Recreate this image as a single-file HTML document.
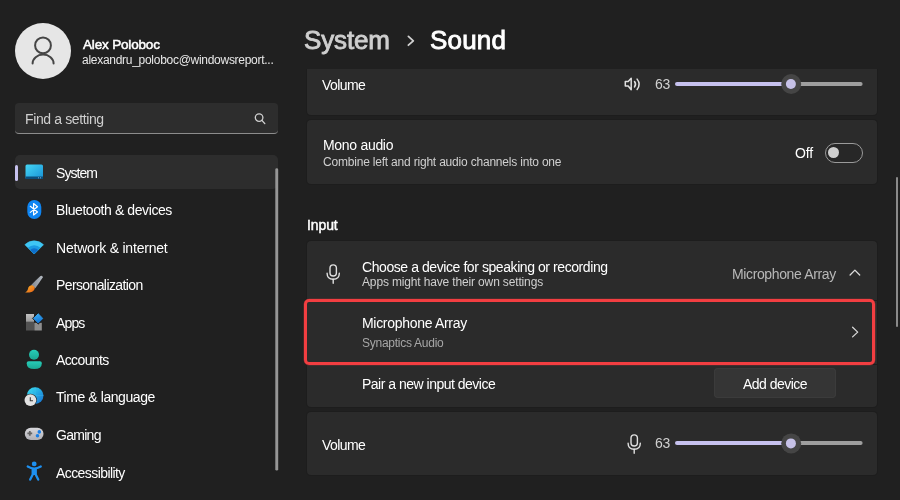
<!DOCTYPE html>
<html><head><meta charset="utf-8"><style>
html,body{margin:0;padding:0;width:900px;height:500px;overflow:hidden;background:#202020;}
body{position:relative;font-family:"Liberation Sans",sans-serif;}
.t{position:absolute;white-space:nowrap;will-change:transform;}
.r{position:absolute;}
</style></head><body>
<div class="r" style="left:15px;top:23px;width:56px;height:56px;background:#e6e6e6;border-radius:28px;"></div>
<svg class="r" style="left:29px;top:35px" width="28" height="32" viewBox="0 0 28 32">
<circle cx="14" cy="10.4" r="7.9" fill="none" stroke="#454545" stroke-width="2"/>
<path d="M3.6 28.6 A10.5 9 0 0 1 24.6 28.6" fill="none" stroke="#454545" stroke-width="2" stroke-linecap="round"/>
</svg>
<div class="t" style="left:83px;top:38.07px;font-size:13.5px;line-height:13.5px;color:#fff;font-weight:normal;letter-spacing:-0.17px;-webkit-text-stroke:0.5px #fff;">Alex Poloboc</div>
<div class="t" style="left:82px;top:54.04px;font-size:12px;line-height:12px;color:#e8e8e8;font-weight:normal;letter-spacing:-0.28px;">alexandru_poloboc@windowsreport...</div>
<div class="r" style="left:15px;top:103px;width:263px;height:31px;background:#2d2d2d;border-radius:4px;border-bottom:1px solid #8c8c8c;box-sizing:border-box;"></div>
<div class="t" style="left:24.8px;top:111.55px;font-size:14px;line-height:14px;color:#cfcfcf;font-weight:normal;letter-spacing:-0.38px;">Find a setting</div>
<svg class="r" style="left:253px;top:111px" width="14" height="14" viewBox="0 0 14 14">
<circle cx="6.1" cy="6.6" r="3.8" fill="none" stroke="#d0d0d0" stroke-width="1.3"/>
<path d="M8.9 9.4 L11.8 12.6" stroke="#d0d0d0" stroke-width="1.4" stroke-linecap="round"/>
</svg>
<div class="r" style="left:15px;top:155px;width:263px;height:34px;background:#2d2d2d;border-radius:5px;"></div>
<div class="r" style="left:15px;top:164.5px;width:3px;height:16px;background:#c6c1ee;border-radius:2px;"></div>
<div class="t" style="left:56.3px;top:165.85px;font-size:14px;line-height:14px;color:#fff;font-weight:normal;letter-spacing:-0.95px;">System</div>
<div class="t" style="left:56.3px;top:202.95px;font-size:14px;line-height:14px;color:#fff;font-weight:normal;letter-spacing:-0.41px;">Bluetooth &amp; devices</div>
<div class="t" style="left:56.3px;top:240.75px;font-size:14px;line-height:14px;color:#fff;font-weight:normal;letter-spacing:-0.2px;">Network &amp; internet</div>
<div class="t" style="left:56.3px;top:278.15px;font-size:14px;line-height:14px;color:#fff;font-weight:normal;letter-spacing:-0.61px;">Personalization</div>
<div class="t" style="left:56.3px;top:316.05px;font-size:14px;line-height:14px;color:#fff;font-weight:normal;letter-spacing:-0.85px;">Apps</div>
<div class="t" style="left:56.3px;top:353.45px;font-size:14px;line-height:14px;color:#fff;font-weight:normal;letter-spacing:-0.61px;">Accounts</div>
<div class="t" style="left:56.3px;top:390.35px;font-size:14px;line-height:14px;color:#fff;font-weight:normal;letter-spacing:-0.43px;">Time &amp; language</div>
<div class="t" style="left:56.3px;top:428.35px;font-size:14px;line-height:14px;color:#fff;font-weight:normal;letter-spacing:-0.71px;">Gaming</div>
<div class="t" style="left:56.3px;top:465.85px;font-size:14px;line-height:14px;color:#fff;font-weight:normal;letter-spacing:-0.58px;">Accessibility</div>
<svg class="r" style="left:270px;top:160px" width="12" height="320"><rect x="5.3" y="8.2" width="2.9" height="302.4" rx="1.45" fill="#969696"/></svg>
<div class="t" style="left:304px;top:27.29px;font-size:26px;line-height:26px;color:#cfcfcf;font-weight:normal;letter-spacing:-0.15px;-webkit-text-stroke:0.85px #cfcfcf;">System</div>
<svg class="r" style="left:405px;top:35px" width="12" height="14" viewBox="0 0 12 14">
<path d="M3.4 1.4 L8.3 5.8 L3.4 10.2" fill="none" stroke="#d0d0d0" stroke-width="1.8" stroke-linecap="round" stroke-linejoin="round"/>
</svg>
<div class="t" style="left:430px;top:27.29px;font-size:26px;line-height:26px;color:#fff;font-weight:normal;letter-spacing:0.2px;-webkit-text-stroke:0.85px #fff;">Sound</div>
<div class="r" style="left:896px;top:177px;width:2px;height:150px;background:#8a8a8a;border-radius:1px;"></div>
<div class="r" style="left:307px;top:69px;width:570px;height:46px;background:#2b2b2b;border-radius:0px;border-radius:0 0 4px 4px;box-shadow:0 1px 0 0 #1d1d1d, 1px 0 0 0 #1d1d1d, -1px 0 0 0 #1d1d1d;"></div>
<div class="t" style="left:322px;top:78.45px;font-size:14px;line-height:14px;color:#fff;font-weight:normal;letter-spacing:-0.58px;">Volume</div>
<svg class="r" style="left:623px;top:76px" width="20" height="16" viewBox="0 0 20 16">
<path d="M2.3 5.6 H5.2 L8.2 2.3 V13.7 L5.2 10 H2.3 Z" fill="none" stroke="#e0e0e0" stroke-width="1.5" stroke-linejoin="round"/>
<path d="M11.5 5.5 Q13.6 8.3 11.5 11" fill="none" stroke="#e0e0e0" stroke-width="1.5" stroke-linecap="round"/>
<path d="M14.1 3.1 Q18.2 8.3 14.1 13.5" fill="none" stroke="#e0e0e0" stroke-width="1.5" stroke-linecap="round"/>
</svg>
<div class="t" style="left:655px;top:77.05px;font-size:14px;line-height:14px;color:#d0d0d0;font-weight:normal;letter-spacing:-0.3px;">63</div>
<svg class="r" style="left:660px;top:69.1px" width="220" height="30" viewBox="660 69.1 220 30">
<line x1="677" y1="84.1" x2="791" y2="84.1" stroke="#c6c1ee" stroke-width="4" stroke-linecap="round"/>
<line x1="791" y1="84.1" x2="860.6" y2="84.1" stroke="#9e9e9e" stroke-width="4" stroke-linecap="round"/>
<circle cx="791.2" cy="84.1" r="10" fill="#454545"/>
<circle cx="790.9" cy="84.1" r="5" fill="#c7c2e8"/>
</svg>
<div class="r" style="left:307px;top:120px;width:570px;height:64px;background:#2b2b2b;border-radius:4px;box-shadow:0 0 0 1px #1d1d1d;"></div>
<div class="t" style="left:322.5px;top:138.15px;font-size:14px;line-height:14px;color:#fff;font-weight:normal;letter-spacing:-0.3px;">Mono audio</div>
<div class="t" style="left:322.5px;top:155.54px;font-size:12px;line-height:12px;color:#cfcfcf;font-weight:normal;letter-spacing:-0.2px;">Combine left and right audio channels into one</div>
<div class="t" style="left:795px;top:145.95px;font-size:14px;line-height:14px;color:#fff;font-weight:normal;letter-spacing:-0.2px;">Off</div>
<div class="r" style="left:825px;top:143px;width:38px;height:19.5px;background:#272727;border-radius:10px;border:1px solid #9a9a9a;box-sizing:border-box;"></div>
<div class="r" style="left:828.2px;top:147.2px;width:11px;height:11px;background:#cfcfcf;border-radius:6px;"></div>
<div class="t" style="left:306.5px;top:218.15px;font-size:14px;line-height:14px;color:#fff;font-weight:normal;letter-spacing:-0.1px;-webkit-text-stroke:0.45px #fff;">Input</div>
<div class="r" style="left:307px;top:241px;width:570px;height:166px;background:#2b2b2b;border-radius:4px;box-shadow:0 0 0 1px #1d1d1d;"></div>
<svg class="r" style="left:325px;top:263px" width="17" height="22" viewBox="0 0 17 22">
<rect x="5" y="1.9" width="6.4" height="11.1" rx="3.2" fill="none" stroke="#e0e0e0" stroke-width="1.4"/>
<path d="M2.1 10.2 Q2.1 16.2 8.2 16.2 Q14.3 16.2 14.3 10.2" fill="none" stroke="#e0e0e0" stroke-width="1.4" stroke-linecap="round"/>
<path d="M8.2 16.2 V20.2" stroke="#e0e0e0" stroke-width="1.4" stroke-linecap="round"/>
</svg>
<div class="t" style="left:361.5px;top:259.95px;font-size:14px;line-height:14px;color:#fff;font-weight:normal;letter-spacing:-0.425px;">Choose a device for speaking or recording</div>
<div class="t" style="left:361.5px;top:276.44px;font-size:12px;line-height:12px;color:#cfcfcf;font-weight:normal;letter-spacing:-0.15px;">Apps might have their own settings</div>
<div class="t" style="left:731.5px;top:267.35px;font-size:14px;line-height:14px;color:#b8b8b8;font-weight:normal;letter-spacing:-0.37px;">Microphone Array</div>
<svg class="r" style="left:848px;top:267px" width="14" height="10" viewBox="0 0 14 10">
<path d="M2.1 8 L6.9 3.1 L11.7 8" fill="none" stroke="#dcdcdc" stroke-width="1.3" stroke-linecap="round" stroke-linejoin="round"/>
</svg>
<div class="r" style="left:307px;top:300px;width:570px;height:1px;background:#1d1d1d;border-radius:0px;"></div>
<div class="r" style="left:307px;top:364px;width:570px;height:1px;background:#1d1d1d;border-radius:0px;"></div>
<div class="r" style="left:304px;top:299px;width:571px;height:66px;background:transparent;border-radius:5px;border:3px solid #f23e41;box-sizing:border-box;box-shadow:0 0 0.6px 0.3px rgba(242,62,65,0.6);"></div>
<div class="t" style="left:361.5px;top:316.45px;font-size:14px;line-height:14px;color:#fff;font-weight:normal;letter-spacing:-0.3px;">Microphone Array</div>
<div class="t" style="left:361.5px;top:336.54px;font-size:12px;line-height:12px;color:#a6a6a6;font-weight:normal;letter-spacing:-0.26px;">Synaptics Audio</div>
<svg class="r" style="left:849px;top:325px" width="10" height="14" viewBox="0 0 10 14">
<path d="M3.6 2.3 L8.7 7.1 L3.6 11.9" fill="none" stroke="#d8d8d8" stroke-width="1.3" stroke-linecap="round" stroke-linejoin="round"/>
</svg>
<div class="t" style="left:362px;top:376.85px;font-size:14px;line-height:14px;color:#fff;font-weight:normal;letter-spacing:-0.5px;">Pair a new input device</div>
<div class="r" style="left:714px;top:368px;width:122px;height:30px;background:#353535;border-radius:4px;box-shadow:inset 0 0 0 1px #3b3b3b;"></div>
<div class="t" style="left:742.5px;top:376.55px;font-size:14px;line-height:14px;color:#fff;font-weight:normal;letter-spacing:-0.52px;">Add device</div>
<div class="r" style="left:307px;top:412px;width:570px;height:62.8px;background:#2b2b2b;border-radius:4px;box-shadow:0 0 0 1px #1d1d1d;"></div>
<div class="t" style="left:322px;top:437.85px;font-size:14px;line-height:14px;color:#fff;font-weight:normal;letter-spacing:-0.58px;">Volume</div>
<svg class="r" style="left:625.5px;top:432.7px" width="17" height="22" viewBox="0 0 17 22">
<rect x="5" y="1.9" width="6.4" height="11.1" rx="3.2" fill="none" stroke="#e0e0e0" stroke-width="1.4"/>
<path d="M2.1 10.2 Q2.1 16.2 8.2 16.2 Q14.3 16.2 14.3 10.2" fill="none" stroke="#e0e0e0" stroke-width="1.4" stroke-linecap="round"/>
<path d="M8.2 16.2 V20.2" stroke="#e0e0e0" stroke-width="1.4" stroke-linecap="round"/>
</svg>
<div class="t" style="left:655px;top:436.45px;font-size:14px;line-height:14px;color:#d0d0d0;font-weight:normal;letter-spacing:-0.3px;">63</div>
<svg class="r" style="left:660px;top:428.3px" width="220" height="30" viewBox="660 428.3 220 30">
<line x1="677" y1="443.3" x2="791" y2="443.3" stroke="#c6c1ee" stroke-width="4" stroke-linecap="round"/>
<line x1="791" y1="443.3" x2="860.6" y2="443.3" stroke="#9e9e9e" stroke-width="4" stroke-linecap="round"/>
<circle cx="791.2" cy="443.7" r="10" fill="#454545"/>
<circle cx="790.9" cy="443.7" r="5" fill="#c7c2e8"/>
</svg>
<svg class="r" style="left:0;top:0" width="60" height="500" viewBox="0 0 60 500">
<defs>
<linearGradient id="gsys" x1="0" y1="0" x2="1" y2="1"><stop offset="0" stop-color="#45d6f5"/><stop offset="1" stop-color="#1892d6"/></linearGradient>
<linearGradient id="gglobe" x1="0.1" y1="0.1" x2="0.9" y2="0.9"><stop offset="0" stop-color="#3ad6ee"/><stop offset="0.45" stop-color="#25aee4"/><stop offset="1" stop-color="#1a78d4"/></linearGradient>
<linearGradient id="gbrush" x1="0" y1="0" x2="1" y2="0"><stop offset="0" stop-color="#7f858e"/><stop offset="1" stop-color="#b4bac2"/></linearGradient>
<linearGradient id="gtip" x1="0" y1="0" x2="1" y2="1"><stop offset="0" stop-color="#fcb52a"/><stop offset="1" stop-color="#e65f16"/></linearGradient>
<linearGradient id="gacc" x1="0" y1="0" x2="0" y2="1"><stop offset="0" stop-color="#27cdb8"/><stop offset="1" stop-color="#1aa893"/></linearGradient>
<linearGradient id="gapp1" x1="0" y1="0" x2="0" y2="1"><stop offset="0" stop-color="#c2c2c2"/><stop offset="1" stop-color="#9a9a9a"/></linearGradient>
<linearGradient id="gpad" x1="0" y1="0" x2="0" y2="1"><stop offset="0" stop-color="#d8d8dc"/><stop offset="1" stop-color="#b0b0b6"/></linearGradient>
<linearGradient id="gdia" x1="0" y1="0" x2="0.3" y2="1"><stop offset="0" stop-color="#3cb0f4"/><stop offset="1" stop-color="#1679d8"/></linearGradient>
</defs>
<!-- System monitor -->
<rect x="25.5" y="164.5" width="17.5" height="14.5" rx="1.5" fill="url(#gsys)"/>
<rect x="25.5" y="176.5" width="17.5" height="2.5" fill="#0b4e7c"/>
<rect x="38" y="177" width="1" height="1.5" fill="#5a8cb0"/><rect x="40" y="177" width="1" height="1.5" fill="#5a8cb0"/>
<!-- Bluetooth -->
<rect x="27.3" y="200" width="14" height="19" rx="7" fill="#0f85f2"/>
<path d="M30.3 206.3 L37.5 212 L33.6 215 V203.5 L37.5 206.7 L30.3 212.4" fill="none" stroke="#fff" stroke-width="1.2" stroke-linejoin="round" stroke-linecap="round"/>
<!-- Wifi -->
<path d="M34.2 254 L24.9 244.7 A13.2 13.2 0 0 1 43.5 244.7 Z" fill="#3ec6f4" stroke="#3ec6f4" stroke-width="0.6" stroke-linejoin="round"/>
<path d="M34.2 254 L28 247.8 A8.8 8.8 0 0 1 40.4 247.8 Z" fill="#1b9be3"/>
<path d="M34.2 254 L30.1 249.9 A5.8 5.8 0 0 1 38.3 249.9 Z" fill="#0e6fcb"/>
<!-- Brush -->
<path d="M40.4 275.9 Q42.9 275 42.7 277.5 Q39.4 282.6 35.3 288.2 L31 285.2 Q35.6 280.3 40.4 275.9 Z" fill="url(#gbrush)"/>
<path d="M31.4 285.2 Q34.6 285.6 34.8 288.4 Q34 292.8 25.2 292.6 Q27.6 291.2 28 289 Q28.4 285.6 31.4 285.2 Z" fill="url(#gtip)"/>
<!-- Apps -->
<rect x="26" y="314" width="8" height="7.8" fill="url(#gapp1)"/>
<rect x="26" y="322" width="8" height="8.5" fill="#525252"/>
<rect x="34.3" y="322.8" width="7.5" height="7.7" fill="#8e8e8e"/>
<path d="M38.2 312.6 L44 318.4 L38.2 324.2 L32.4 318.4 Z" fill="#1f1f1f" stroke="#1f1f1f" stroke-width="0.6" stroke-linejoin="round"/>
<path d="M38.2 313.8 L42.8 318.4 L38.2 323 L33.6 318.4 Z" fill="url(#gdia)" stroke="url(#gdia)" stroke-width="1" stroke-linejoin="round"/>
<!-- Accounts -->
<circle cx="34" cy="354.7" r="5" fill="url(#gacc)"/>
<path d="M26.7 363 Q26.7 361.3 28.6 361.3 H39.9 Q41.8 361.3 41.8 363 V363.6 Q41.8 369.1 34.25 369.1 Q26.7 369.1 26.7 363.6 Z" fill="url(#gacc)"/>
<!-- Time & language -->
<circle cx="35.1" cy="395.6" r="8.4" fill="url(#gglobe)"/>
<path d="M31 392 Q38 395.6 31 404 M35.1 387.2 V404 M27 395.6 H43.5" fill="none" stroke="#5fd0f0" stroke-opacity="0.35" stroke-width="0.7"/>
<circle cx="30.4" cy="400.1" r="6.4" fill="#1f1f1f"/>
<circle cx="30.4" cy="400.1" r="5.9" fill="#e2e2e2"/>
<path d="M30.3 397.2 V400.7 H33" fill="none" stroke="#3a3a3a" stroke-width="1.1"/>
<!-- Gaming -->
<rect x="24.8" y="427.8" width="18.7" height="12.1" rx="6" fill="url(#gpad)"/>
<path d="M29.8 431 V435.8 M27.4 433.4 H32.2" stroke="#656565" stroke-width="1.8"/>
<circle cx="39.3" cy="431.9" r="1.8" fill="#1a7fe6"/>
<circle cx="37.5" cy="435.8" r="1.8" fill="#1a7fe6"/>
<!-- Accessibility -->
<circle cx="34.2" cy="463.9" r="2.4" fill="#1e90f0"/>
<path d="M27.7 466.5 Q31 468.5 34.2 468.5 Q37.4 468.5 40.8 466.5" fill="none" stroke="#1e90f0" stroke-width="2.2" stroke-linecap="round"/>
<path d="M32.7 469 V474.4 L30.2 479.6 M35.7 469 V474.4 L38.2 479.6" fill="none" stroke="#1e90f0" stroke-width="2.3" stroke-linecap="round" stroke-linejoin="round"/>
<rect x="32.2" y="468" width="4" height="7" rx="1" fill="#1e90f0"/>
</svg>

</body></html>
